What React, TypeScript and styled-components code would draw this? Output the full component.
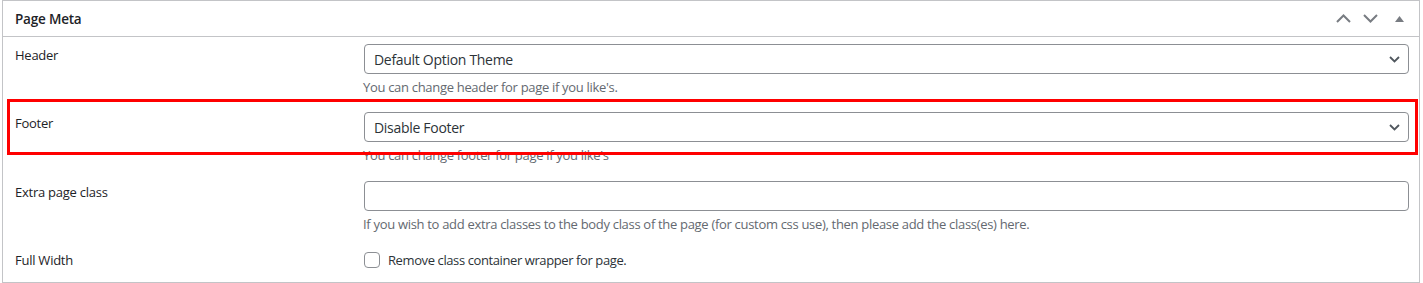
import React from "react";
import styled, { createGlobalStyle } from "styled-components";

const Global = createGlobalStyle`
  html, body { margin: 0; padding: 0; background: #ffffff; }
  body { font-family: "Open Sans", "Noto Sans", sans-serif; color: #1d2327; }
  * { box-sizing: border-box; }
`;

const Panel = styled.div`
  position: relative;
  margin-left: 2px;
  width: 1418px;
  border: 1px solid #c3c4c7;
  background: #fff;
`;

const PanelHead = styled.div`
  display: flex;
  align-items: center;
  height: 36px;
  padding: 0 10px 0 12px;
  border-bottom: 1px solid #c3c4c7;
`;

const Title = styled.h2`
  flex: 1;
  margin: 0;
  font-size: 13.5px;
  font-weight: 600;
  letter-spacing: -0.2px;
  color: #1d2327;
`;

const HeadActions = styled.div`
  display: flex;
  align-items: center;
  gap: 11px;
`;

const IconBtn = styled.span<{ $w: number }>`
  display: flex;
  align-items: center;
  justify-content: center;
  width: ${(p) => p.$w}px;
  height: 20px;
`;

const Row = styled.div<{ $pt?: number; $pb?: number }>`
  position: relative;
  display: grid;
  grid-template-columns: 361px 1fr;
  padding: ${(p) => p.$pt ?? 7}px 10px ${(p) => p.$pb ?? 8}px 0;
`;

const Label = styled.div<{ $mt?: number }>`
  padding-left: 12px;
  margin-top: ${(p) => p.$mt ?? 1}px;
  font-size: 13px;
  line-height: 20px;
  font-weight: 500;
  letter-spacing: -0.25px;
  color: #1d2327;
`;

const Field = styled.div`
  display: flex;
  flex-direction: column;
`;

const SelectBox = styled.div`
  position: relative;
  display: flex;
  align-items: center;
  height: 30px;
  padding: 0 9px;
  border: 1px solid #8c8f94;
  border-radius: 4px;
  font-size: 14px;
  letter-spacing: -0.3px;
  color: #2c3338;
  background: #fff;
`;

const Chevron = styled.span`
  position: absolute;
  right: 8px;
  top: 11px;
  display: flex;
`;

const TextInput = styled.div`
  height: 30px;
  border: 1px solid #8c8f94;
  border-radius: 4px;
  background: #fff;
`;

const Help = styled.p`
  margin: 4px 0 0 -1px;
  font-size: 13px;
  line-height: 19px;
  letter-spacing: -0.31px;
  color: #646970;
`;

const CheckLine = styled.label`
  display: flex;
  align-items: center;
  gap: 8px;
  font-size: 13px;
  line-height: 20px;
  letter-spacing: -0.4px;
  color: #2c3338;
`;

const Checkbox = styled.span`
  width: 16px;
  height: 16px;
  border: 1px solid #8c8f94;
  border-radius: 4px;
  background: #fff;
`;

const Highlight = styled.div`
  position: absolute;
  left: 4px;
  right: 1px;
  top: -6px;
  height: 56px;
  border: 3px solid #ff0000;
  pointer-events: none;
`;

const ChevronDown = () => (
  <svg width="11" height="7" viewBox="0 0 11 7" fill="none">
    <path d="M1 1 L5.5 5.5 L10 1" stroke="#50575e" strokeWidth="1.8" />
  </svg>
);

export default function App() {
  return (
    <>
      <Global />
      <Panel>
        <PanelHead>
          <Title>Page Meta</Title>
          <HeadActions>
            <IconBtn $w={16}>
              <svg width="15" height="9" viewBox="0 0 15 9" fill="none">
                <path d="M1 8 L7.5 1.5 L14 8" stroke="#787c82" strokeWidth="2" />
              </svg>
            </IconBtn>
            <IconBtn $w={16}>
              <svg width="15" height="9" viewBox="0 0 15 9" fill="none">
                <path d="M1 1 L7.5 7.5 L14 1" stroke="#787c82" strokeWidth="2" />
              </svg>
            </IconBtn>
            <IconBtn $w={20}>
              <svg width="9" height="6" viewBox="0 0 9 6">
                <path d="M0 6 L4.5 0 L9 6 Z" fill="#787c82" />
              </svg>
            </IconBtn>
          </HeadActions>
        </PanelHead>

        <Row>
          <Label>Header</Label>
          <Field>
            <SelectBox>
              Default Option Theme
              <Chevron>
                <ChevronDown />
              </Chevron>
            </SelectBox>
            <Help>You can change header for page if you like's.</Help>
          </Field>
        </Row>

        <Row>
          <Highlight />
          <Label>Footer</Label>
          <Field>
            <SelectBox>
              Disable Footer
              <Chevron>
                <ChevronDown />
              </Chevron>
            </SelectBox>
            <Help>You can change footer for page if you like's</Help>
          </Field>
        </Row>

        <Row $pt={8}>
          <Label>Extra page class</Label>
          <Field>
            <TextInput />
            <Help>
              If you wish to add extra classes to the body class of the page (for custom css use), then please add the class(es) here.
            </Help>
          </Field>
        </Row>

        <Row $pt={8} $pb={12}>
          <Label $mt={0}>Full Width</Label>
          <Field>
            <CheckLine>
              <Checkbox />
              Remove class container wrapper for page.
            </CheckLine>
          </Field>
        </Row>
      </Panel>
    </>
  );
}
